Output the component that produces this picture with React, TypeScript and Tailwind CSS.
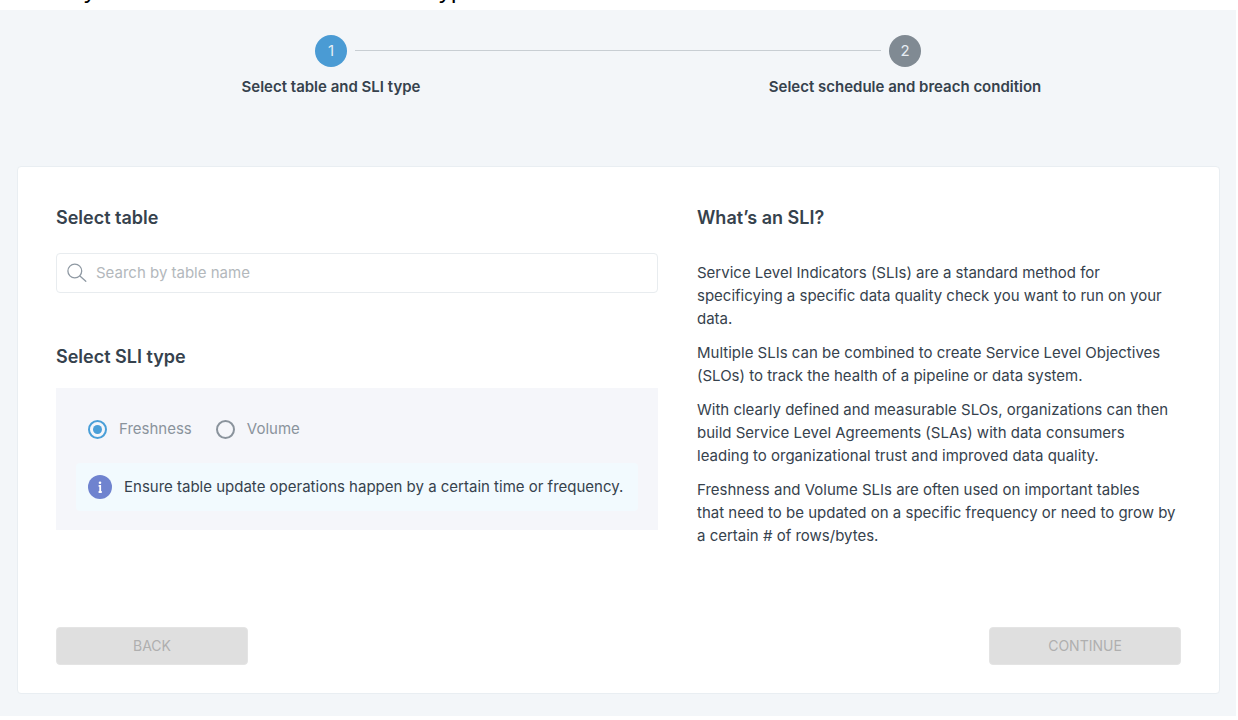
import {useState} from "react";

const steps = [
    {id: 1, label: "Select table and SLI type", circle: "bg-[#4a9bd4]"},
    {id: 2, label: "Select schedule and breach condition", circle: "bg-[#808a93]"},
];

const sliTypes = ["Freshness", "Volume"];

const paragraphs = [
    "Service Level Indicators (SLIs) are a standard method for\nspecificying a specific data quality check you want to run on your\ndata.",
    "Multiple SLIs can be combined to create Service Level Objectives\n(SLOs) to track the health of a pipeline or data system.",
    "With clearly defined and measurable SLOs, organizations can then\nbuild Service Level Agreements (SLAs) with data consumers\nleading to organizational trust and improved data quality.",
    "Freshness and Volume SLIs are often used on important tables\nthat need to be updated on a specific frequency or need to grow by\na certain # of rows/bytes.",
];

// Title line scrolled out of view, only its descenders still show
const ScrolledTitle = () => (
    <div
        className="flex h-[10px] items-end gap-[343px] overflow-hidden pb-2 pl-[84px] font-['Liberation_Sans',sans-serif] text-2xl leading-6 text-black">
        <span>y</span>
        <span>yp</span>
    </div>
);

const Stepper = () => (
    <ol className="relative grid grid-cols-2 px-11 pt-[25px]">
        {steps.map((step) => (
            <li key={step.id} className="flex flex-col items-center gap-2">
                <span
                    className={`flex size-8 items-center justify-center rounded-full text-[15px] text-[#e6edf3] ${step.circle}`}>
                    {step.id}
                </span>
                <span className="text-[15px] leading-6 font-semibold">{step.label}</span>
            </li>
        ))}
        {/* connector between the two circles */}
        <li aria-hidden="true" className="absolute top-10 right-[355px] left-[355px] h-px bg-[#c8ced3]"/>
    </ol>
);

const SearchIcon = () => (
    <svg viewBox="0 0 20 20" className="size-5 shrink-0" fill="none" stroke="#8f99a3" strokeWidth="1.3">
        <circle cx="7.8" cy="8" r="6.9"/>
        <path d="M12.9 13l5.9 5.2" strokeLinecap="round"/>
    </svg>
);

const InfoIcon = () => (
    <svg viewBox="0 0 24 24" className="size-6 shrink-0">
        <circle cx="12" cy="12" r="12" fill="#6f83cf"/>
        <circle cx="12" cy="7.7" r="1.3" fill="#fff"/>
        <path d="M10.6 10.8h1.6v6M10.6 17h3.2" fill="none" stroke="#fff" strokeWidth="1.8"/>
    </svg>
);

const App = () => {
    const [sliType, setSliType] = useState("Freshness");

    return (
        <div className="bg-white font-['Inter',sans-serif] text-[#36424d]">
            <ScrolledTitle/>
            <main className="mr-[2px] bg-[#f3f6f9] pb-[22px]">
                <Stepper/>
                <section className="mr-4 ml-[17px] mt-[67px] rounded border border-[#e9eef2] bg-white px-[38px] pt-[39px] pb-7">
                    <div className="grid grid-cols-[602fr_484fr] gap-[39px]">
                        <div>
                            <h2 className="text-lg leading-6 font-semibold">
                                <label htmlFor="table-search">Select table</label>
                            </h2>
                            <div className="mt-[23px] flex h-10 items-center gap-[9px] rounded border border-[#e8ecef] px-[10px]">
                                <SearchIcon/>
                                <input
                                    id="table-search"
                                    type="text"
                                    placeholder="Search by table name"
                                    className="w-full text-[15px] outline-none placeholder:text-[#b3b8bc]"
                                />
                            </div>
                            <h2 className="mt-[52px] text-lg leading-6 font-semibold">Select SLI type</h2>
                            <div className="mt-[19px] bg-[#f5f6fa] px-5 pt-[29px] pb-[19px]">
                                <div className="flex gap-6 px-3">
                                    {sliTypes.map((type) => (
                                        <label key={type} className="flex items-center gap-3 text-[15px] leading-6 text-[#8a939c]">
                                            <input
                                                type="radio"
                                                name="sli-type"
                                                checked={sliType === type}
                                                onChange={() => setSliType(type)}
                                                className="size-[19px] appearance-none rounded-full border-2 border-[#8a939c] bg-clip-content p-[3px] checked:border-[#4a9fd8] checked:bg-[#4a9fd8]"
                                            />
                                            {type}
                                        </label>
                                    ))}
                                </div>
                                <div className="mt-[22px] flex h-12 items-center gap-3 rounded bg-[#f2fafe] px-3">
                                    <InfoIcon/>
                                    <p className="text-[15px] leading-6 whitespace-nowrap">
                                        Ensure table update operations happen by a certain time or frequency.
                                    </p>
                                </div>
                            </div>
                        </div>
                        <div>
                            <h2 className="text-lg leading-6 font-semibold">What’s an SLI?</h2>
                            <div className="mt-[31px] space-y-[11px] text-[15px] leading-[23px] whitespace-pre-line">
                                {paragraphs.map((text) => (
                                    <p key={text}>{text}</p>
                                ))}
                            </div>
                        </div>
                    </div>
                    <div className="mt-20 flex justify-between">
                        {["BACK", "CONTINUE"].map((label) => (
                            <button
                                key={label}
                                type="button"
                                disabled
                                className="h-[38px] w-48 rounded border border-[#e4e4e4] bg-[#dfdfdf] text-sm text-[#afafaf]">
                                {label}
                            </button>
                        ))}
                    </div>
                </section>
            </main>
        </div>
    );
};

export default App;
